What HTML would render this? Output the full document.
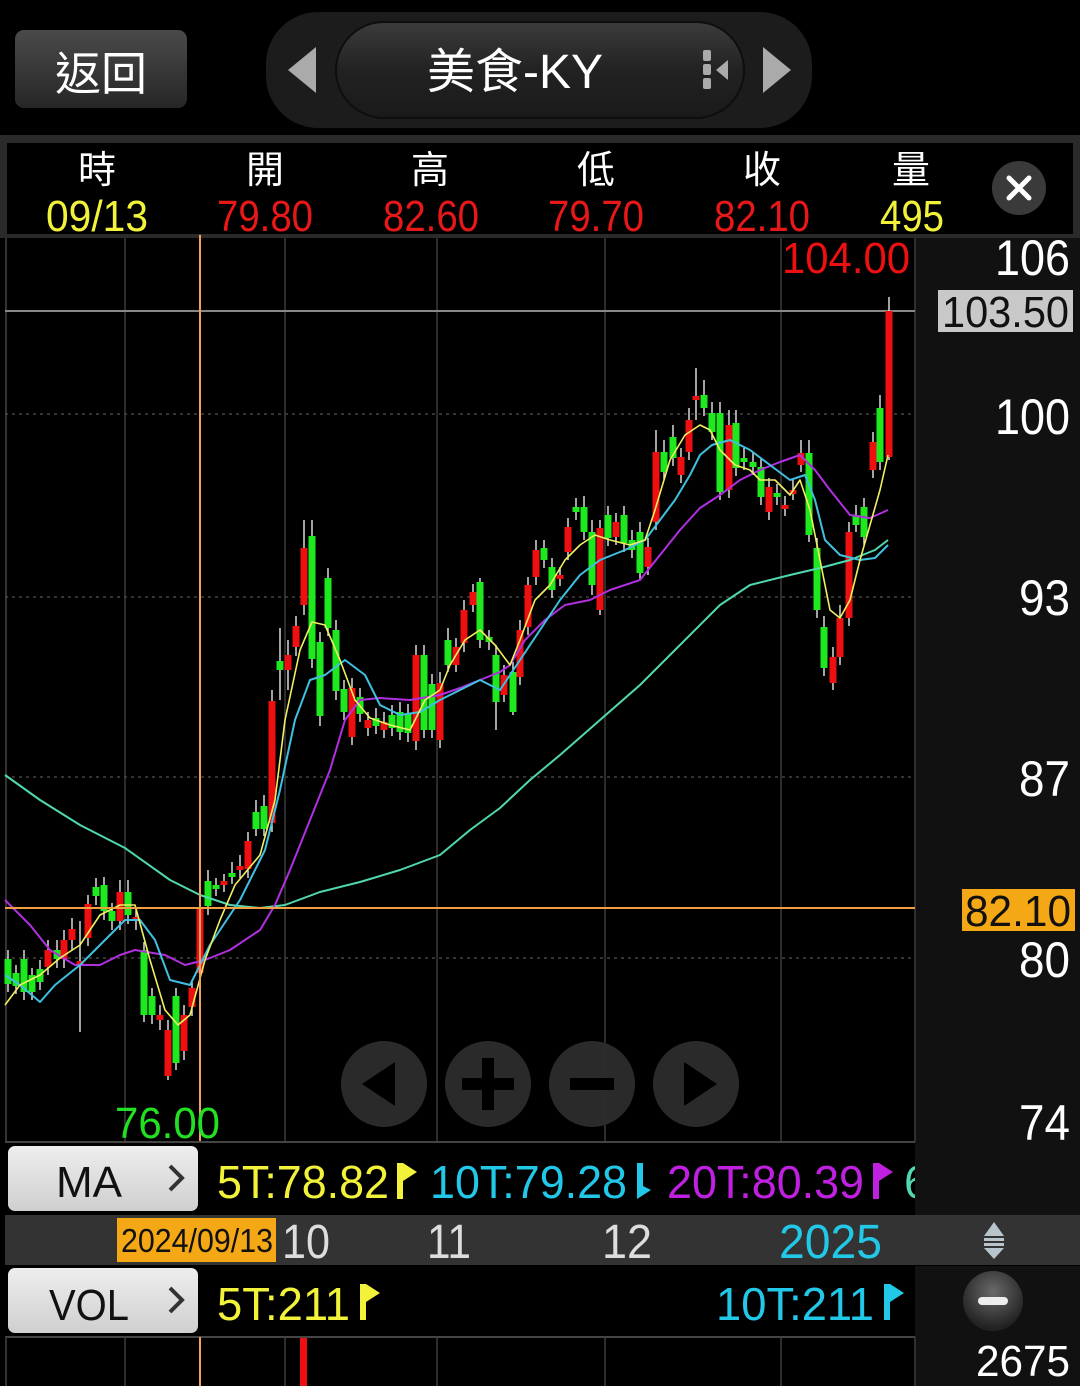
<!DOCTYPE html>
<html><head><meta charset="utf-8"><style>
html,body{margin:0;padding:0;background:#000;width:1080px;height:1386px;overflow:hidden}
svg{display:block}
text{font-family:"Liberation Sans","Noto Sans CJK TC",sans-serif}
</style></head><body>
<svg width="1080" height="1386" viewBox="0 0 1080 1386" xmlns="http://www.w3.org/2000/svg">
<defs>
<linearGradient id="btn" x1="0" y1="0" x2="0" y2="1"><stop offset="0" stop-color="#4a4a4a"/><stop offset="1" stop-color="#262626"/></linearGradient>
<linearGradient id="pill" x1="0" y1="0" x2="0" y2="1"><stop offset="0" stop-color="#3c3c3c"/><stop offset="0.5" stop-color="#222"/><stop offset="1" stop-color="#1a1a1a"/></linearGradient>
<linearGradient id="lbtn" x1="0" y1="0" x2="0" y2="1"><stop offset="0" stop-color="#eee"/><stop offset="1" stop-color="#cfcfcf"/></linearGradient>
<radialGradient id="circ" cx="0.5" cy="0.35" r="0.6"><stop offset="0" stop-color="#6a6a6a"/><stop offset="1" stop-color="#222"/></radialGradient>
</defs>
<rect width="1080" height="1386" fill="#000"/>
<rect x="15" y="30" width="172" height="78" rx="9" fill="url(#btn)"/>
<text x="101" y="90" font-size="46" fill="#fff" text-anchor="middle">返回</text>
<rect x="266" y="12" width="546" height="116" rx="52" fill="#1c1c1c"/>
<rect x="336" y="22" width="408" height="96" rx="48" fill="url(#pill)" stroke="#0e0e0e" stroke-width="2"/>
<text x="427" y="88" font-size="48" fill="#fff" textLength="176" lengthAdjust="spacingAndGlyphs">美食-KY</text>
<polygon points="316,47 316,93 288,70" fill="#aaa"/>
<polygon points="763,47 763,93 791,70" fill="#aaa"/>
<rect x="703" y="50" width="8" height="11" rx="2" fill="#aaa"/>
<rect x="703" y="64" width="8" height="11" rx="2" fill="#aaa"/>
<rect x="703" y="78" width="8" height="11" rx="2" fill="#aaa"/>
<polygon points="728,60 728,80 716,70" fill="#aaa"/>
<rect x="0" y="135" width="1080" height="103" fill="#2a2a2a"/>
<rect x="7" y="143" width="1066" height="91" fill="#000"/>
<g font-size="38" fill="#fff" text-anchor="middle">
<text x="97" y="183">時</text><text x="265" y="183">開</text><text x="430" y="183">高</text><text x="596" y="183">低</text><text x="762" y="183">收</text><text x="911" y="183">量</text>
</g>
<g font-size="44">
<text x="46" y="231" fill="#f2f23a" textLength="102" lengthAdjust="spacingAndGlyphs">09/13</text>
<text x="217" y="231" fill="#e81818" textLength="96" lengthAdjust="spacingAndGlyphs">79.80</text>
<text x="383" y="231" fill="#e81818" textLength="96" lengthAdjust="spacingAndGlyphs">82.60</text>
<text x="548" y="231" fill="#e81818" textLength="96" lengthAdjust="spacingAndGlyphs">79.70</text>
<text x="714" y="231" fill="#e81818" textLength="96" lengthAdjust="spacingAndGlyphs">82.10</text>
<text x="880" y="231" fill="#f2f23a" textLength="64" lengthAdjust="spacingAndGlyphs">495</text>
</g>
<circle cx="1019" cy="188" r="27" fill="#3a3a3a"/>
<path d="M1009 178 L1029 198 M1029 178 L1009 198" stroke="#fff" stroke-width="5" stroke-linecap="round"/>
<rect x="915" y="238" width="165" height="977" fill="#111"/>
<rect x="915" y="1266" width="165" height="120" fill="#111"/>
<rect x="5" y="238" width="2" height="904" fill="#333"/>
<g stroke="#3a3a3a" stroke-width="1.5">
<line x1="125" y1="238" x2="125" y2="1142"/><line x1="285" y1="238" x2="285" y2="1142"/><line x1="437" y1="238" x2="437" y2="1142"/><line x1="605" y1="238" x2="605" y2="1142"/><line x1="781" y1="238" x2="781" y2="1142"/><line x1="915" y1="238" x2="915" y2="1142"/>
</g>
<g stroke="#444" stroke-width="1.5" stroke-dasharray="3,4">
<line x1="5" y1="414" x2="915" y2="414"/><line x1="5" y1="597" x2="915" y2="597"/><line x1="5" y1="777" x2="915" y2="777"/><line x1="5" y1="958" x2="915" y2="958"/>
</g>
<line x1="5" y1="311" x2="915" y2="311" stroke="#888" stroke-width="2"/>
<g fill="#2c2c2c" fill-opacity="0.95">
<circle cx="384" cy="1084" r="43"/><circle cx="488" cy="1084" r="43"/><circle cx="592" cy="1084" r="43"/><circle cx="696" cy="1084" r="43"/>
</g>
<polygon points="395,1062 395,1106 362,1084" fill="#000"/>
<rect x="462" y="1078" width="52" height="12" fill="#000"/><rect x="482" y="1058" width="12" height="52" fill="#000"/>
<rect x="570" y="1078" width="44" height="12" fill="#000"/>
<polygon points="684,1062 684,1106 717,1084" fill="#000"/>
<path stroke="#e8e8e8" stroke-width="1.4" fill="none" d="
M8 950V992 M16 965V994 M24 950V1000 M32 968V1000 M40 960V990 M48 940V975 M57 940V968 M64 930V968 M72 918V950 M80 921V1032 M88 895V946 M96 878V905 M104 877V920 M112 903V930 M120 880V930 M128 880V924 M136 908V930
M144 942V1022 M152 988V1024 M160 1005V1030 M168 1020V1080 M176 988V1070 M184 1005V1060 M192 980V1016 M200 900V980 M208 870V915 M216 878V896 M224 874V892 M232 862V884 M240 855V878 M248 832V878 M256 800V836 M264 795V836
M272 690V832 M280 628V700 M288 640V690 M296 616V656 M304 520V615 M312 520V668 M320 632V726 M328 568V636 M336 620V700 M344 680V720 M352 678V745 M360 688V722 M368 712V736 M376 708V734 M384 712V738 M392 705V736 M400 702V740 M408 704V742
M416 645V750 M424 645V738 M432 674V738 M440 672V748 M448 628V672 M456 638V672 M464 600V652 M473 584V612 M480 578V648 M489 630V650 M496 645V730 M504 665V702 M513 662V715 M520 620V685 M528 577V635 M536 540V585 M544 540V568 M552 558V598 M560 567V586
M568 518V560 M576 498V520 M584 496V540 M592 520V595 M600 520V615 M608 506V546 M616 513V545 M624 506V552 M632 530V558 M640 522V580 M648 538V575 M656 430V530 M664 440V480 M673 425V466 M681 448V483 M689 408V460 M696 368V420 M704 380V416 M712 402V440
M720 402V500 M729 410V498 M736 410V476 M744 448V470 M753 452V475 M761 458V505 M769 478V520 M777 484V505 M785 496V516 M793 480V500 M801 440V472 M809 440V542 M817 538V618 M824 616V676 M833 647V690 M840 605V665 M849 522V626 M856 505V532 M864 498V545 M873 432V478 M880 395V470 M889 297V460"/>
<path fill="#1ee81e" d="
M4.5 959h7v25h-7z M12.5 973h7v13h-7z M20.5 959h7v33h-7z M28.5 975h7v17h-7z M36.5 969h7v13h-7z M53.5 950h7v9h-7z M92.5 887h7v9h-7z M100.5 885h7v26h-7z M108.5 911h7v10h-7z M124.5 892h7v23h-7z M140.5 950h7v65h-7z M148.5 996h7v19h-7z M172.5 996h7v67h-7z
M204.5 881h7v25h-7z M212.5 885h7v4h-7z M228.5 873h7v4h-7z M252.5 812h7v17h-7z M260.5 806h7v23h-7z M276.5 661h7v9h-7z M308.5 536h7v123h-7z M316.5 642h7v74h-7z M324.5 578h7v50h-7z M332.5 630h7v61h-7z M340.5 689h7v23h-7z M356.5 697h7v17h-7z
M372.5 718h7v8h-7z M388.5 715h7v13h-7z M396.5 712h7v20h-7z M404.5 714h7v19h-7z M420.5 655h7v75h-7z M428.5 684h7v46h-7z M444.5 640h7v25h-7z M476.5 582h7v58h-7z M485.5 637h7v5h-7z M492.5 655h7v47h-7z M509.5 672h7v40h-7z
M540.5 548h7v12h-7z M548.5 567h7v23h-7z M572.5 507h7v5h-7z M580.5 507h7v25h-7z M588.5 532h7v53h-7z M604.5 515h7v23h-7z M620.5 515h7v28h-7z M628.5 540h7v10h-7z M636.5 532h7v41h-7z M660.5 452h7v20h-7z M669.5 437h7v21h-7z
M700.5 395h7v13h-7z M708.5 413h7v19h-7z M716.5 413h7v79h-7z M732.5 423h7v45h-7z M740.5 458h7v4h-7z M749.5 462h7v5h-7z M757.5 467h7v30h-7z M773.5 493h7v4h-7z M805.5 453h7v82h-7z M813.5 548h7v62h-7z M820.5 627h7v41h-7z M852.5 515h7v10h-7z M860.5 507h7v30h-7z M876.5 408h7v54h-7z"/>
<path fill="#ee1010" d="
M44.5 950h7v17h-7z M60.5 940h7v19h-7z M68.5 929h7v11h-7z M76.5 961h7v4h-7z M84.5 904h7v34h-7z M116.5 892h7v29h-7z M132.5 917h7v4h-7z M156.5 1015h7v5h-7z M164.5 1030h7v46h-7z M180.5 1015h7v36h-7z M188.5 988h7v19h-7z M196.5 909h7v64h-7z
M220.5 881h7v4h-7z M236.5 866h7v4h-7z M244.5 841h7v28h-7z M268.5 701h7v122h-7z M284.5 655h7v15h-7z M292.5 626h7v21h-7z M300.5 548h7v57h-7z M348.5 688h7v49h-7z M364.5 720h7v8h-7z M380.5 722h7v8h-7z M412.5 655h7v86h-7z M436.5 683h7v57h-7z
M452.5 647h7v18h-7z M460.5 610h7v33h-7z M469.5 592h7v13h-7z M500.5 675h7v20h-7z M516.5 630h7v47h-7z M524.5 585h7v42h-7z M532.5 550h7v27h-7z M556.5 575h7v4h-7z M564.5 527h7v25h-7z M596.5 528h7v82h-7z M612.5 522h7v15h-7z M644.5 547h7v20h-7z
M652.5 452h7v70h-7z M677.5 457h7v18h-7z M685.5 420h7v32h-7z M692.5 396h7v4h-7z M725.5 425h7v65h-7z M765.5 487h7v25h-7z M781.5 505h7v4h-7z M789.5 490h7v4h-7z M797.5 453h7v12h-7z M829.5 657h7v26h-7z M836.5 618h7v39h-7z M845.5 532h7v86h-7z M869.5 442h7v28h-7z M885.5 311h7v146h-7z"/>
<g fill="none" stroke-width="2" stroke-linejoin="round">
<polyline stroke="#50d8b0" points="5,775 40,800 80,825 125,848 170,880 200,895 230,905 260,908 285,905 320,892 360,882 400,870 440,855 470,830 500,808 530,780 560,755 600,720 640,685 680,645 720,605 750,585 790,575 820,568 850,560 875,550 888,540"/>
<polyline stroke="#b030e0" points="5,900 30,925 50,950 75,965 100,965 120,955 135,950 165,955 185,965 205,960 230,950 260,930 275,905 290,870 310,820 330,770 345,720 360,700 380,698 410,700 440,695 460,688 480,680 500,672 510,665 525,640 545,620 565,605 590,600 610,590 640,580 660,555 680,530 700,508 720,495 740,480 760,470 780,462 800,455 815,470 830,490 850,515 870,518 888,510"/>
<polyline stroke="#40c0e0" points="5,975 20,985 40,1002 55,985 80,965 100,945 125,920 140,920 155,940 170,980 190,985 210,945 240,900 265,850 280,790 295,720 310,680 325,675 345,660 365,675 380,705 400,715 420,712 440,700 460,690 480,680 500,690 520,660 540,630 560,600 580,575 600,560 625,550 645,540 660,520 675,500 690,475 700,455 712,445 730,440 750,450 770,465 790,480 805,475 815,500 825,540 840,555 860,560 875,558 888,545"/>
<polyline stroke="#f0f060" stroke-width="1.6" points="5,1005 20,985 40,975 60,958 80,945 100,915 120,905 135,905 150,960 165,1010 178,1025 190,1015 205,960 220,920 235,885 260,855 275,800 285,720 300,650 312,622 325,625 340,660 355,700 370,718 390,725 410,730 425,700 440,690 450,665 465,640 480,630 495,645 510,665 520,640 535,600 550,585 565,560 580,545 595,535 610,540 630,545 645,540 655,510 670,460 685,435 700,425 710,430 720,450 735,465 750,470 760,480 775,480 790,495 800,480 810,510 820,560 830,610 840,618 850,600 860,560 870,525 880,490 888,455"/>
</g>
<line x1="200" y1="235" x2="200" y2="1142" stroke="#f0a060" stroke-width="2"/>
<line x1="5" y1="908" x2="915" y2="908" stroke="#f0a040" stroke-width="2"/>
<text x="782" y="273" font-size="44" fill="#ee1010" textLength="128" lengthAdjust="spacingAndGlyphs">104.00</text>
<text x="115" y="1138" font-size="44" fill="#22e022" textLength="105" lengthAdjust="spacingAndGlyphs">76.00</text>
<g font-size="50" fill="#fff">
<text x="995" y="275" textLength="75" lengthAdjust="spacingAndGlyphs">106</text>
<text x="995" y="434" textLength="75" lengthAdjust="spacingAndGlyphs">100</text>
<text x="1019" y="615" textLength="51" lengthAdjust="spacingAndGlyphs">93</text>
<text x="1019" y="796" textLength="51" lengthAdjust="spacingAndGlyphs">87</text>
<text x="1019" y="977" textLength="51" lengthAdjust="spacingAndGlyphs">80</text>
<text x="1019" y="1140" textLength="51" lengthAdjust="spacingAndGlyphs">74</text>
</g>
<rect x="938" y="290" width="135" height="42" fill="#c8c8c8"/>
<text x="942" y="327" font-size="44" fill="#111" textLength="127" lengthAdjust="spacingAndGlyphs">103.50</text>
<rect x="962" y="889" width="113" height="42" fill="#f5a815"/>
<text x="965" y="926" font-size="44" fill="#111" textLength="106" lengthAdjust="spacingAndGlyphs">82.10</text>
<line x1="5" y1="1142" x2="915" y2="1142" stroke="#444" stroke-width="2"/>
<rect x="8" y="1146" width="190" height="65" rx="7" fill="url(#lbtn)"/>
<text x="56" y="1197" font-size="44" fill="#111" textLength="66" lengthAdjust="spacingAndGlyphs">MA</text>
<path d="M170 1166 L182 1178 L170 1190" stroke="#333" stroke-width="4" fill="none"/>
<g font-size="46">
<text x="217" y="1198" fill="#f2f23a" textLength="172" lengthAdjust="spacingAndGlyphs">5T:78.82</text>
<text x="430" y="1198" fill="#22c8e8" textLength="197" lengthAdjust="spacingAndGlyphs">10T:79.28</text>
<text x="667" y="1198" fill="#c020e0" textLength="197" lengthAdjust="spacingAndGlyphs">20T:80.39</text>
<text x="904" y="1198" fill="#50d8b0">6</text>
</g>
<path d="M397 1163 v36 h6 v-18 l14 -9 l-14 -9z" fill="#f2f23a"/>
<path d="M637 1163 v36 l14 -9 l-8 -4 v-23z" fill="#22c8e8"/>
<path d="M873 1163 v36 h6 v-18 l14 -9 l-14 -9z" fill="#c020e0"/>
<rect x="915" y="1142" width="165" height="73" fill="#111"/>
<rect x="5" y="1215" width="1075" height="50" fill="#333"/>
<rect x="117" y="1218" width="159" height="44" fill="#f5a815"/>
<text x="121" y="1252" font-size="33" fill="#111" textLength="152" lengthAdjust="spacingAndGlyphs">2024/09/13</text>
<g font-size="48" fill="#ddd">
<text x="282" y="1258" textLength="48" lengthAdjust="spacingAndGlyphs">10</text><text x="427" y="1258" textLength="44" lengthAdjust="spacingAndGlyphs">11</text><text x="602" y="1258" textLength="50" lengthAdjust="spacingAndGlyphs">12</text>
</g>
<text x="779" y="1258" font-size="48" fill="#22c8e8" textLength="103" lengthAdjust="spacingAndGlyphs">2025</text>
<polygon points="994,1222 1004,1236 984,1236" fill="#b8c4cc"/>
<rect x="984" y="1238" width="20" height="3" fill="#b8c4cc"/>
<rect x="984" y="1243" width="20" height="3" fill="#b8c4cc"/>
<polygon points="984,1248 1004,1248 994,1259" fill="#b8c4cc"/>
<rect x="8" y="1268" width="190" height="65" rx="7" fill="url(#lbtn)"/>
<text x="49" y="1320" font-size="44" fill="#111" textLength="80" lengthAdjust="spacingAndGlyphs">VOL</text>
<path d="M170 1288 L182 1300 L170 1312" stroke="#333" stroke-width="4" fill="none"/>
<text x="217" y="1320" font-size="46" fill="#f2f23a" textLength="133" lengthAdjust="spacingAndGlyphs">5T:211</text>
<path d="M360 1284 v36 h6 v-18 l14 -9 l-14 -9z" fill="#f2f23a"/>
<text x="716" y="1320" font-size="46" fill="#22c8e8" textLength="158" lengthAdjust="spacingAndGlyphs">10T:211</text>
<path d="M884 1284 v36 h6 v-18 l14 -9 l-14 -9z" fill="#22c8e8"/>
<circle cx="993" cy="1301" r="30" fill="url(#circ)"/>
<rect x="978" y="1297" width="30" height="8" rx="4" fill="#eee"/>
<line x1="5" y1="1337" x2="915" y2="1337" stroke="#444" stroke-width="2"/>
<g stroke="#3a3a3a" stroke-width="1.5">
<line x1="125" y1="1337" x2="125" y2="1386"/><line x1="285" y1="1337" x2="285" y2="1386"/><line x1="437" y1="1337" x2="437" y2="1386"/><line x1="605" y1="1337" x2="605" y2="1386"/><line x1="781" y1="1337" x2="781" y2="1386"/><line x1="915" y1="1337" x2="915" y2="1386"/>
</g>
<rect x="5" y="1337" width="2" height="49" fill="#333"/>
<line x1="200" y1="1337" x2="200" y2="1386" stroke="#f0a060" stroke-width="2"/>
<rect x="300" y="1338" width="7" height="48" fill="#ee1010"/>
<text x="976" y="1376" font-size="44" fill="#fff" textLength="94" lengthAdjust="spacingAndGlyphs">2675</text>
</svg>
</body></html>
